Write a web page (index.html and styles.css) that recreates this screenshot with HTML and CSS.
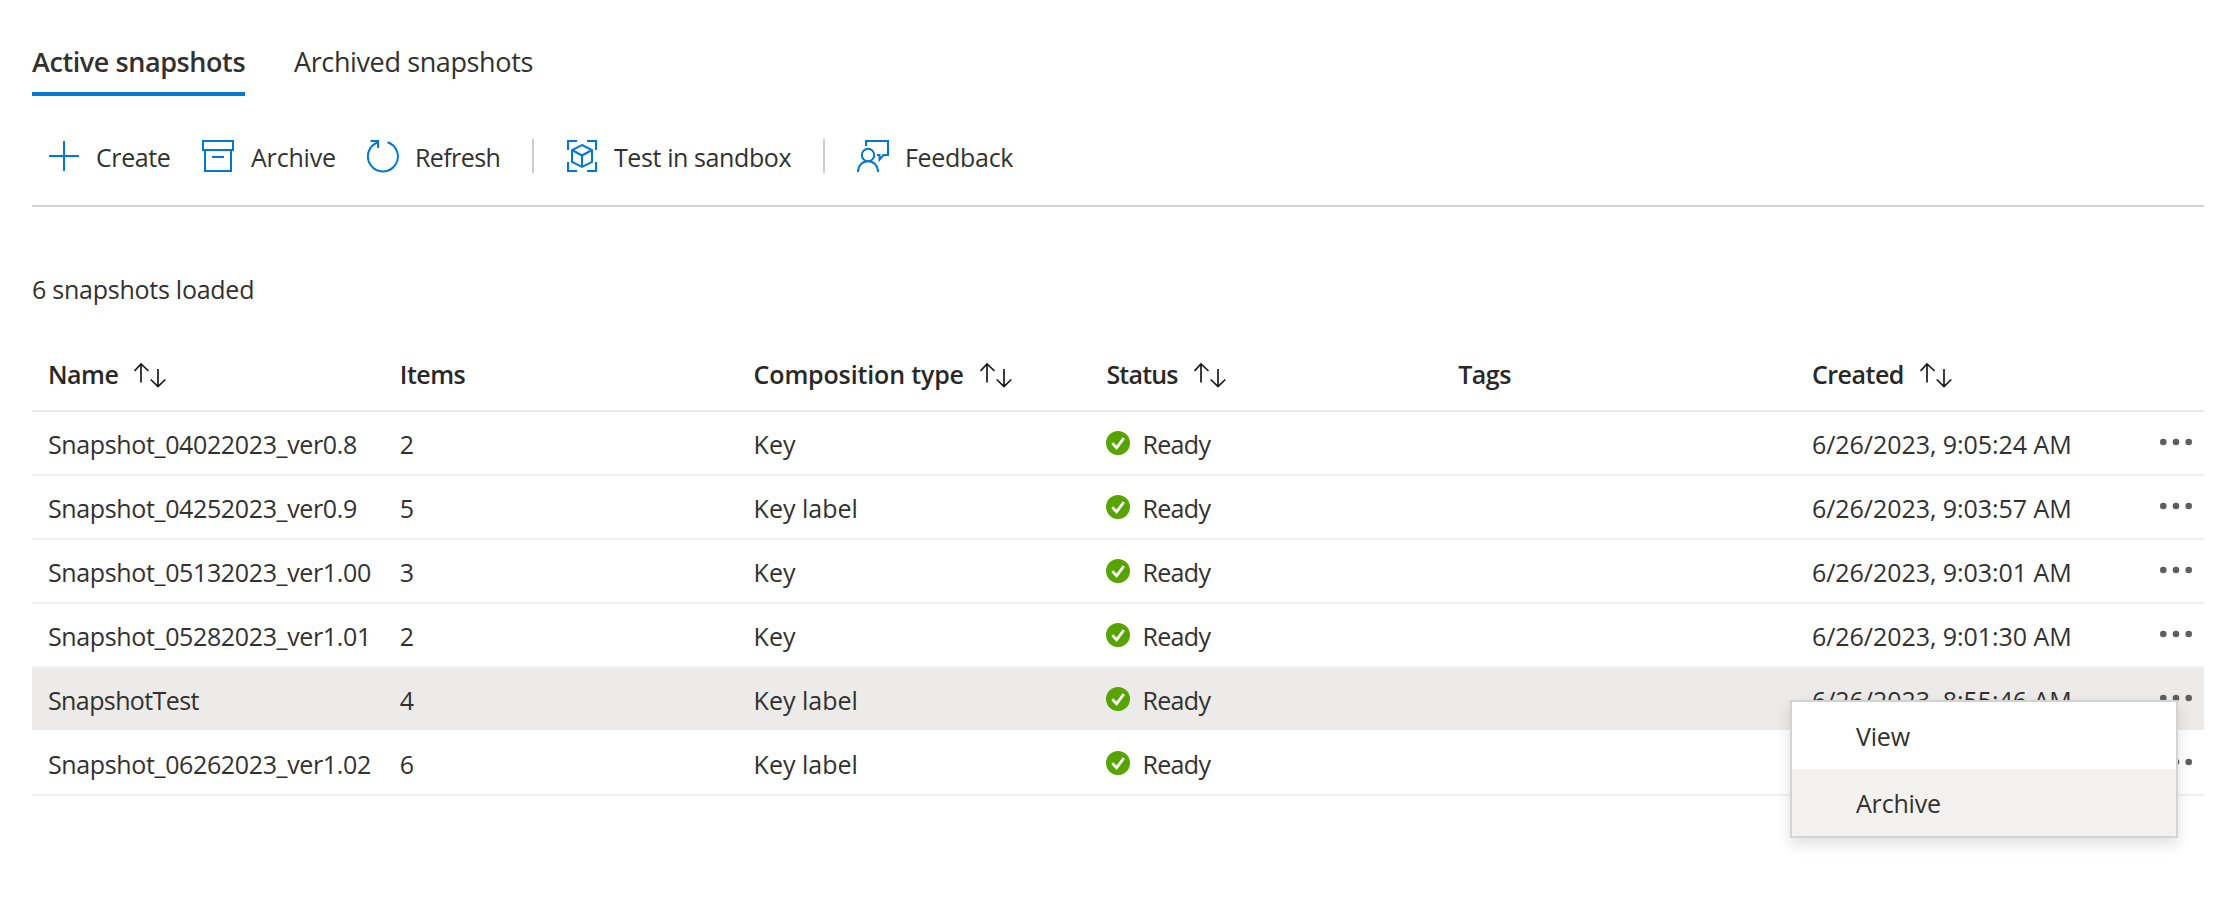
FILE: index.html
```
<!DOCTYPE html>
<html lang="en">
<head>
<meta charset="utf-8">
<title>Snapshots</title>
<link rel="stylesheet" href="styles.css">
</head>
<body>
<svg class="defs" width="0" height="0" aria-hidden="true">
  <symbol id="sort" viewBox="0 0 32 26">
    <path d="M7 20.500V2M0.500 9 7 2l7.500 7M24 7v17.500M16.700 17.500 24 24.500l7.300-7"/>
  </symbol>
  <symbol id="ok" viewBox="0 0 24 24">
    <circle cx="12" cy="12" r="12" fill="#57a300"/>
    <path d="M6.300 12.300l4.300 4.500 7.200-9.700" fill="none" stroke="#fff" stroke-width="2.800"/>
  </symbol>
  <symbol id="more" viewBox="0 0 34 8">
    <circle cx="4.300" cy="4" r="3.300"/><circle cx="17" cy="4" r="3.300"/><circle cx="29.700" cy="4" r="3.300"/>
  </symbol>
</svg>
<nav class="tabs">
  <a class="tab tab-active">Active snapshots</a>
  <a class="tab">Archived snapshots</a>
</nav>
<div class="toolbar">
  <button class="cmd cmd-create"><svg class="cmd-icon" width="32" height="34"><path d="M1 17h30M16 2v30"/></svg><span>Create</span></button>
  <button class="cmd cmd-archive"><svg class="cmd-icon" width="32" height="34"><path d="M1 2h30v9H1zM3 11v21h26V11M10 18h12"/></svg><span>Archive</span></button>
  <button class="cmd cmd-refresh"><svg class="cmd-icon" width="32" height="34"><path d="M3.500 2H11v7M11 3.300A15 15 0 1 0 20.500 3.200"/></svg><span>Refresh</span></button>
  <i class="sep sep-first"></i>
  <button class="cmd cmd-sandbox"><svg class="cmd-icon" width="30" height="34"><path d="M1 11V2h9M20 2h9v9M29 23v9h-9M10 32H1v-9M15 6l10 5v12l-10 5-10-5V11zM5 11l10 5.500L25 11M15 16.500V28"/></svg><span>Test in sandbox</span></button>
  <i class="sep sep-second"></i>
  <button class="cmd cmd-feedback"><svg class="cmd-icon" width="33" height="34"><path d="M9 7V2h22v14h-4.500l-4 4.500V16H20"/><circle cx="11" cy="16" r="6.200"/><path d="M1 33c0-6.500 4.500-10.800 10-10.800S21 26.500 21 33"/></svg><span>Feedback</span></button>
</div>
<p class="count">6 snapshots loaded</p>
<div class="table">
  <div class="row head">
    <div class="cell"><span class="t-name">Name</span><svg class="sort"><use href="#sort"/></svg></div>
    <div class="cell items"><span>Items</span></div>
    <div class="cell"><span class="t-comp">Composition type</span><svg class="sort"><use href="#sort"/></svg></div>
    <div class="cell"><span class="t-status">Status</span><svg class="sort"><use href="#sort"/></svg></div>
    <div class="cell tags"><span>Tags</span></div>
    <div class="cell"><span class="t-created">Created</span><svg class="sort"><use href="#sort"/></svg></div>
  </div>
  <div class="row">
    <div class="cell name">Snapshot_04022023_ver0.8</div><div class="cell items">2</div><div class="cell">Key</div>
    <div class="cell status"><svg class="ok"><use href="#ok"/></svg><span>Ready</span></div><div class="cell"></div>
    <div class="cell"><span class="date">6/26/2023, 9:05:24 AM</span><svg class="more"><use href="#more"/></svg></div>
  </div>
  <div class="row">
    <div class="cell name">Snapshot_04252023_ver0.9</div><div class="cell items">5</div><div class="cell">Key label</div>
    <div class="cell status"><svg class="ok"><use href="#ok"/></svg><span>Ready</span></div><div class="cell"></div>
    <div class="cell"><span class="date">6/26/2023, 9:03:57 AM</span><svg class="more"><use href="#more"/></svg></div>
  </div>
  <div class="row">
    <div class="cell name">Snapshot_05132023_ver1.00</div><div class="cell items">3</div><div class="cell">Key</div>
    <div class="cell status"><svg class="ok"><use href="#ok"/></svg><span>Ready</span></div><div class="cell"></div>
    <div class="cell"><span class="date">6/26/2023, 9:03:01 AM</span><svg class="more"><use href="#more"/></svg></div>
  </div>
  <div class="row">
    <div class="cell name">Snapshot_05282023_ver1.01</div><div class="cell items">2</div><div class="cell">Key</div>
    <div class="cell status"><svg class="ok"><use href="#ok"/></svg><span>Ready</span></div><div class="cell"></div>
    <div class="cell"><span class="date">6/26/2023, 9:01:30 AM</span><svg class="more"><use href="#more"/></svg></div>
  </div>
  <div class="row selected">
    <div class="cell name name-short">SnapshotTest</div><div class="cell items">4</div><div class="cell">Key label</div>
    <div class="cell status"><svg class="ok"><use href="#ok"/></svg><span>Ready</span></div><div class="cell"></div>
    <div class="cell"><span class="date">6/26/2023, 8:55:46 AM</span><svg class="more"><use href="#more"/></svg></div>
    <div class="menu">
      <div class="menu-item">View</div>
      <div class="menu-item hover">Archive</div>
    </div>
  </div>
  <div class="row">
    <div class="cell name">Snapshot_06262023_ver1.02</div><div class="cell items">6</div><div class="cell">Key label</div>
    <div class="cell status"><svg class="ok"><use href="#ok"/></svg><span>Ready</span></div><div class="cell"></div>
    <div class="cell"><svg class="more"><use href="#more"/></svg></div>
  </div>
</div>
</body>
</html>
```
FILE: styles.css
```
* { box-sizing: border-box; }
body {
  min-height: 903px;
  margin: 0;
  padding: 40px 18px 0 32px;
  background: #fff;
  color: #323130;
  font: 25px/34px "Open Sans", "Noto Sans", sans-serif;
}
.defs { position: absolute; }

.tabs { display: flex; gap: 49px; height: 56px; }
.tab { font-size: 27px; line-height: 43px; letter-spacing: -0.38px; white-space: nowrap; }
.tab-active { width: 213px; border-bottom: 4px solid #0078d4; font-weight: 600; letter-spacing: -0.42px; }

.toolbar {
  display: flex;
  align-items: center;
  height: 111px;
  padding: 43px 0 32px 16px;
  border-bottom: 2px solid #d2d2d2;
}
.cmd {
  display: flex;
  gap: 16px;
  padding: 0;
  border: 0;
  background: none;
  color: inherit;
  font: inherit;
  letter-spacing: -0.4px;
  white-space: nowrap;
}
.cmd span { padding-top: 1px; height: 34px; }
.cmd-icon { flex: none; fill: none; stroke: #0078d4; stroke-width: 2; }
.cmd-create { width: 154px; }
.cmd-archive { width: 165px; gap: 17px; letter-spacing: -0.2px; }
.cmd-refresh { width: 165px; letter-spacing: -0.6px; }
.cmd-sandbox { width: 256px; gap: 17px; letter-spacing: -0.4px; }
.cmd-feedback { gap: 15px; letter-spacing: -0.3px; }
.sep { flex: none; width: 2px; height: 34px; background: #ccc; }
.sep-first { margin-right: 33px; }
.sep-second { margin-right: 32px; }

.count { margin: 65px 0 32px; letter-spacing: -0.25px; }

.row {
  position: relative;
  display: grid;
  grid-template-columns: repeat(5, 352.8px) 1fr;
  height: 64px;
  border-bottom: 2px solid #f1f1f1;
}
.cell { display: flex; align-items: center; padding: 1px 0 0 16px; white-space: nowrap; }
.items, .tags { padding-left: 15px; }
.name { letter-spacing: -0.36px; }
.name-short { letter-spacing: -0.6px; }
.date { letter-spacing: -0.05px; }
.head { height: 74px; border-color: #eaeaea; font-weight: 600; color: #292827; letter-spacing: -0.5px; }
.head .cell { padding-top: 0; }
.t-name { width: 86px; }
.t-comp { width: 226px; letter-spacing: -0.15px; }
.t-status { width: 88px; letter-spacing: -0.8px; }
.t-created { width: 108px; }
.sort { flex: none; width: 32px; height: 26px; margin-top: 2px; fill: none; stroke: #1b1a19; stroke-width: 1.7; }
.status span { margin-left: 12px; letter-spacing: -0.65px; }
.ok { width: 24px; height: 24px; margin-top: -1px; }
.more { width: 34px; height: 8px; margin: -3px 11px 0 auto; fill: #605e5c; }
.selected { background: #edebe9; background-clip: padding-box; border-color: #fff; }

.menu {
  position: absolute;
  z-index: 2;
  top: 32px;
  right: 26px;
  width: 388px;
  border: 2px solid #d2d2d2;
  background: #fff;
  box-shadow: 0 6px 14px rgba(0, 0, 0, 0.13);
}
.menu-item { height: 67px; padding: 1px 0 0 64px; line-height: 66px; letter-spacing: -0.2px; }
.menu .hover { background: #f3f2f1; }
```
